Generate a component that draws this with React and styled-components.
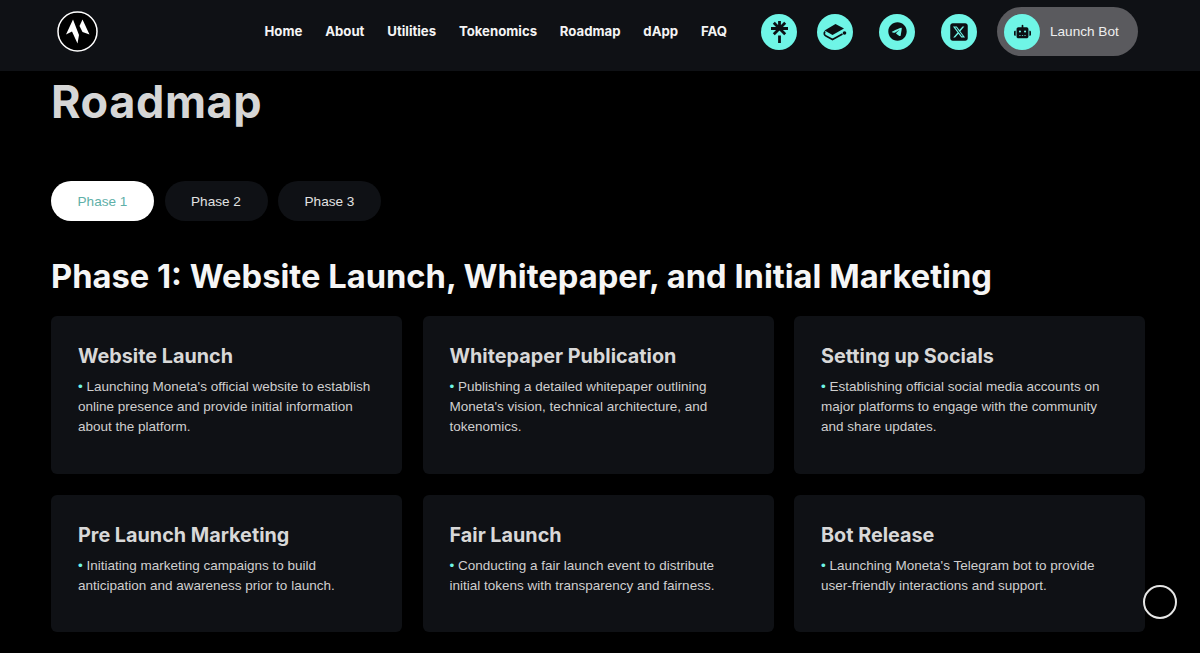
import React from "react";
import styled, { createGlobalStyle } from "styled-components";
import { FaRobot, FaTelegram, FaSquareXTwitter } from "react-icons/fa6";

const GlobalStyle = createGlobalStyle`
  html, body {
    margin: 0;
    height: 100%;
    background: #000;
    overflow: hidden;
  }
  * { box-sizing: border-box; }
`;

const Page = styled.div`
  position: relative;
  width: 1200px;
  height: 653px;
  overflow: hidden;
  background: #000;
  font-family: "Liberation Sans", Arial, sans-serif;
`;

const NavBar = styled.header`
  height: 71px;
  background: #0f1115;
  display: flex;
  align-items: center;
  padding: 0 62px 8px 57px;
`;

const Logo = styled.svg`
  width: 41px;
  height: 41px;
`;

const NavLinks = styled.nav`
  margin-left: auto;
  display: flex;
  gap: 22.8px;
  margin-right: 34px;
  position: relative;
  top: -1px;
`;

const NavLink = styled.a`
  font-family: Inter, sans-serif;
  font-weight: 700;
  font-size: 13.2px;
  color: #f4f4f4;
`;

const IconRow = styled.div`
  display: flex;
  align-items: center;
`;

const IconCircle = styled.span`
  width: 36px;
  height: 36px;
  border-radius: 50%;
  background: #6ff5e6;
  color: #0c0f13;
  display: flex;
  align-items: center;
  justify-content: center;
  font-size: ${(p) => p.$size || 18}px;
  margin-right: ${(p) => p.$gap || 0}px;
`;

const BotPill = styled.a`
  width: 141px;
  height: 49px;
  border-radius: 25px;
  background: #5a5a5e;
  display: flex;
  align-items: center;
  gap: 10px;
  padding-left: 7px;
  font-size: 13.6px;
  color: #eee;
`;

const Main = styled.main`
  padding: 0 55px 0 51px;
`;

const Title = styled.h1`
  margin: 4px 0 0;
  font-family: Inter, sans-serif;
  font-weight: 700;
  font-size: 45px;
  line-height: 54px;
  letter-spacing: 0.6px;
  color: #d6d6d6;
`;

const Tabs = styled.div`
  display: flex;
  gap: 10.5px;
  margin-top: 52px;
`;

const Tab = styled.button`
  width: 103px;
  height: 40px;
  border: none;
  border-radius: 20px;
  font-family: "Liberation Sans", Arial, sans-serif;
  font-size: 13.6px;
  background: ${(p) => (p.$active ? "#fff" : "#0f1115")};
  color: ${(p) => (p.$active ? "#5fb0a8" : "#e2e2e2")};
`;

const PhaseTitle = styled.h2`
  margin: 34px 0 19px;
  font-family: Inter, sans-serif;
  font-weight: 700;
  font-size: 32.7px;
  line-height: 42px;
  color: #f5f5f5;
  white-space: nowrap;
`;

const CardGrid = styled.div`
  display: grid;
  grid-template-columns: repeat(3, 351px);
  gap: 21px 20.5px;
`;

const Card = styled.article`
  height: ${(p) => p.$height}px;
  background: #0f1115;
  border-radius: 6px;
  padding: 27px 27px 0;
`;

const CardTitle = styled.h3`
  margin: 0 0 8px;
  font-family: Inter, sans-serif;
  font-weight: 700;
  font-size: 19.8px;
  line-height: 26px;
  color: #d8d8d8;
`;

const CardText = styled.p`
  margin: 0;
  font-size: 13.5px;
  line-height: 20px;
  color: #cfcfcf;
`;

const Dot = styled.span`
  color: #6ff5e6;
`;

const ScrollCircle = styled.div`
  position: absolute;
  left: 1143px;
  top: 585px;
  width: 34px;
  height: 34px;
  border: 2px solid #e6e6e6;
  border-radius: 50%;
`;

const links = ["Home", "About", "Utilities", "Tokenomics", "Roadmap", "dApp", "FAQ"];

const cards = [
  ["Website Launch", "Launching Moneta's official website to establish online presence and provide initial information about the platform."],
  ["Whitepaper Publication", "Publishing a detailed whitepaper outlining Moneta's vision, technical architecture, and tokenomics."],
  ["Setting up Socials", "Establishing official social media accounts on major platforms to engage with the community and share updates."],
  ["Pre Launch Marketing", "Initiating marketing campaigns to build anticipation and awareness prior to launch."],
  ["Fair Launch", "Conducting a fair launch event to distribute initial tokens with transparency and fairness."],
  ["Bot Release", "Launching Moneta's Telegram bot to provide user-friendly interactions and support."],
];

const LinktreeIcon = () => (
  <svg width="17" height="22" viewBox="0 0 17 22" fill="none" stroke="currentColor" strokeWidth="2.8">
    <path d="M8.500 0v7.500M0 7.500h17M2.800 1.800l11.400 11.400M14.200 1.800 2.800 13.200" />
    <path d="M8.500 14.500V22" />
  </svg>
);

const BookIcon = () => (
  <svg width="25" height="18" viewBox="0 0 25 18" fill="none">
    <path d="M1.500 7.500 12.500 1l8.500 4.500L9.500 12z" fill="currentColor" />
    <path d="M2 8.500c-1.500 2-.5 3.800 1 4.500l6.500 3.500 10-5.500" stroke="currentColor" strokeWidth="1.7" />
    <circle cx="21.500" cy="10" r="1.800" fill="currentColor" />
  </svg>
);

export default function App() {
  return (
    <Page>
      <GlobalStyle />
      <NavBar>
        <Logo viewBox="0 0 41 41">
          <circle cx="20.5" cy="20.5" r="19.5" fill="#000" stroke="#fff" strokeWidth="1.5" />
          <path d="M16 8.500 9 23.500l6-3 5.500 12 1.500-8.500z" fill="#fff" />
          <path d="M25.500 8.500 22.500 15l3 6 7 2.500z" fill="#fff" />
        </Logo>
        <NavLinks>
          {links.map((l) => (
            <NavLink key={l}>{l}</NavLink>
          ))}
        </NavLinks>
        <IconRow>
          <IconCircle $gap={20}><LinktreeIcon /></IconCircle>
          <IconCircle $gap={26}><BookIcon /></IconCircle>
          <IconCircle $gap={26} $size={19}><FaTelegram /></IconCircle>
          <IconCircle $gap={20} $size={20}><FaSquareXTwitter /></IconCircle>
          <BotPill>
            <IconCircle $size={17}><FaRobot /></IconCircle>
            Launch Bot
          </BotPill>
        </IconRow>
      </NavBar>
      <Main>
        <Title>Roadmap</Title>
        <Tabs>
          <Tab $active>Phase 1</Tab>
          <Tab>Phase 2</Tab>
          <Tab>Phase 3</Tab>
        </Tabs>
        <PhaseTitle>Phase 1: Website Launch, Whitepaper, and Initial Marketing</PhaseTitle>
        <CardGrid>
          {cards.map(([title, text], i) => (
            <Card key={title} $height={i < 3 ? 158 : 137}>
              <CardTitle>{title}</CardTitle>
              <CardText>
                <Dot>•</Dot> {text}
              </CardText>
            </Card>
          ))}
        </CardGrid>
      </Main>
      <ScrollCircle />
    </Page>
  );
}
